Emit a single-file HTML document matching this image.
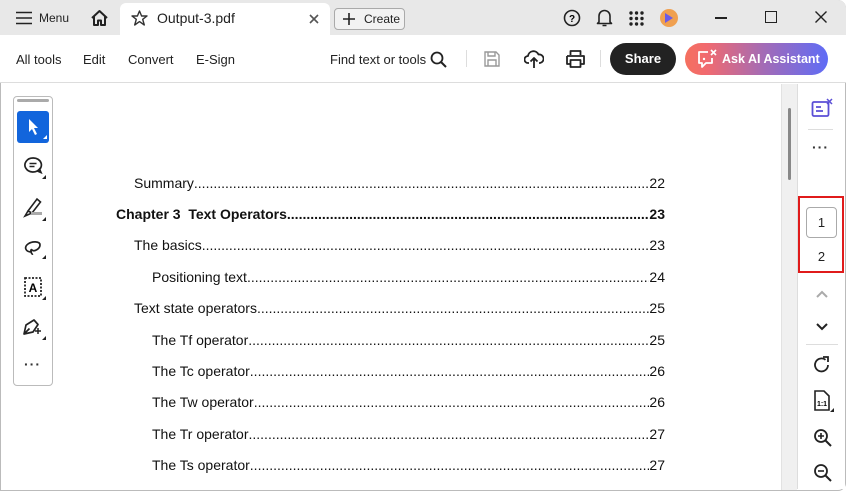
<!DOCTYPE html>
<html><head><meta charset="utf-8"><style>
*{box-sizing:border-box;margin:0;padding:0}
body{width:846px;height:491px;overflow:hidden;font-family:"Liberation Sans",Arial,sans-serif;background:#fff;position:relative;color:#222}
.abs{position:absolute}
#title{left:0;top:0;width:846px;height:35px;background:#e8e8e8;border-top-right-radius:8px}
#tab{left:120px;top:3px;width:210px;height:32px;background:#fff;border-radius:6px 6px 0 0}
.t{font-size:13px;color:#222}
#tb{left:0;top:35px;width:846px;height:48px;background:#fff;border-bottom:1px solid #ddd}
.toc{position:absolute;left:0;width:665px;display:flex;font-size:14px;color:#111;line-height:16px;white-space:nowrap}
.toc .l{flex:1;overflow:hidden;}
.toc .l::after{content:"................................................................................................................................................................................................................................................................"}
.dots{font-size:14px;font-weight:bold;letter-spacing:1px;color:#333}
</style></head><body>
<div class="abs" style="left:0;top:0;width:846px;height:491px;border:1px solid #bbb;border-radius:0 8px 8px 0"></div>
<div id="title" class="abs"></div>
<svg class="abs" style="left:16px;top:11px" width="16" height="14"><path d="M0 1.5H16M0 7H16M0 12.5H16" stroke="#222" stroke-width="1.6"/></svg>
<div class="abs t" style="left:39px;top:11px;font-size:12px">Menu</div>
<svg class="abs" style="left:90px;top:9px" width="19" height="18"><path d="M2 9L9.5 2L17 9M4 7.5V16H8V11.5H11V16H15V7.5" fill="none" stroke="#222" stroke-width="2" stroke-linejoin="round"/></svg>
<div id="tab" class="abs"></div>
<svg class="abs" style="left:131px;top:10px" width="17" height="16"><path d="M8.5 1L10.6 6H16L11.7 9.3L13.3 15L8.5 11.6L3.7 15L5.3 9.3L1 6H6.4Z" fill="none" stroke="#333" stroke-width="1.4" stroke-linejoin="round"/></svg>
<div class="abs t" style="left:157px;top:10px;font-size:14px">Output-3.pdf</div>
<svg class="abs" style="left:309px;top:14px" width="10" height="10"><path d="M1 1L9 9M9 1L1 9" stroke="#555" stroke-width="1.6"/></svg>
<div class="abs" style="left:334px;top:8px;width:71px;height:22px;border:1px solid #aaa;border-radius:4px;background:#f2f2f2"></div>
<svg class="abs" style="left:343px;top:13px" width="12" height="12"><path d="M6 0V12M0 6H12" stroke="#222" stroke-width="1.6"/></svg>
<div class="abs t" style="left:364px;top:12px;font-size:12px">Create</div>
<svg class="abs" style="left:563px;top:9px" width="18" height="18"><circle cx="9" cy="9" r="7.5" fill="none" stroke="#222" stroke-width="1.6"/><text x="9" y="13" font-size="10" font-weight="bold" text-anchor="middle" font-family="Liberation Sans">?</text></svg>
<svg class="abs" style="left:596px;top:8px" width="17" height="20"><path d="M3 14V8a5.5 5.5 0 0 1 11 0v6l1.5 1.5H1.5Z M6.5 17.5h4" fill="none" stroke="#222" stroke-width="1.6" stroke-linejoin="round"/></svg>
<svg class="abs" style="left:629px;top:11px" width="15" height="15" fill="#222"><circle cx="2" cy="2" r="1.7"/><circle cx="7.5" cy="2" r="1.7"/><circle cx="13" cy="2" r="1.7"/><circle cx="2" cy="7.5" r="1.7"/><circle cx="7.5" cy="7.5" r="1.7"/><circle cx="13" cy="7.5" r="1.7"/><circle cx="2" cy="13" r="1.7"/><circle cx="7.5" cy="13" r="1.7"/><circle cx="13" cy="13" r="1.7"/></svg>
<div class="abs" style="left:660px;top:9px;width:18px;height:18px;border-radius:50%;background:#f0a050"><div style="margin:4px 0 0 5px;width:0;height:0;border-left:8px solid #6b5ce7;border-top:5px solid transparent;border-bottom:5px solid transparent"></div></div>
<div class="abs" style="left:715px;top:17px;width:12px;height:1.5px;background:#222"></div>
<div class="abs" style="left:765px;top:11px;width:12px;height:12px;border:1.5px solid #222"></div>
<svg class="abs" style="left:815px;top:11px" width="12" height="12"><path d="M0.5 0.5L11.5 11.5M11.5 0.5L0.5 11.5" stroke="#222" stroke-width="1.4"/></svg>
<div id="tb" class="abs"></div>
<div class="abs t" style="left:16px;top:52px">All tools</div>
<div class="abs t" style="left:83px;top:52px">Edit</div>
<div class="abs t" style="left:128px;top:52px">Convert</div>
<div class="abs t" style="left:196px;top:52px">E-Sign</div>
<div class="abs t" style="left:330px;top:52px">Find text or tools</div>
<svg class="abs" style="left:430px;top:51px" width="17" height="17"><circle cx="7" cy="7" r="5.5" fill="none" stroke="#222" stroke-width="1.8"/><path d="M11 11L16 16" stroke="#222" stroke-width="2"/></svg>
<div class="abs" style="left:466px;top:50px;width:1px;height:17px;background:#ddd"></div>
<svg class="abs" style="left:484px;top:51px" width="16" height="16"><path d="M1 1H12L15 4V15H1Z M4 1V5H11V1 M4 15V9H12V15" fill="none" stroke="#999" stroke-width="1.4"/></svg>
<svg class="abs" style="left:524px;top:49px" width="20" height="20"><path d="M5 14H4a3.5 3.5 0 0 1 0-7 5.5 5.5 0 0 1 10.5-1.5A4 4 0 0 1 16 14h-1 M10 19V9M6.5 12.5L10 9l3.5 3.5" fill="none" stroke="#222" stroke-width="1.8" stroke-linejoin="round"/></svg>
<svg class="abs" style="left:566px;top:50px" width="19" height="18"><path d="M4.5 5V1h10v4 M1 6h17v8h-3.5 M4.5 14H1V6 M4.5 10h10v7h-10Z" fill="none" stroke="#222" stroke-width="1.8" stroke-linejoin="round"/></svg>
<div class="abs" style="left:600px;top:50px;width:1px;height:17px;background:#ddd"></div>
<div class="abs" style="left:610px;top:43px;width:66px;height:32px;background:#222;border-radius:16px;color:#fff;font-weight:bold;font-size:13px;text-align:center;line-height:32px">Share</div>
<div class="abs" style="left:685px;top:43px;width:143px;height:32px;border-radius:16px;background:linear-gradient(90deg,#f5705f 0%,#f16a6f 15%,#a36bb6 55%,#5f6cf6 100%);color:#fff;font-weight:bold;font-size:12.5px;line-height:32px;padding-left:37px;white-space:nowrap;overflow:hidden">Ask AI Assistant</div>
<svg class="abs" style="left:697px;top:49px" width="20" height="20"><path d="M11 3H2V14H5V18L9 14H15V9" fill="none" stroke="#fff" stroke-width="1.8" stroke-linejoin="round"/><path d="M14 1L19 6M19 1L14 6" stroke="#fff" stroke-width="1.6"/><circle cx="7" cy="10" r="1.2" fill="#fff"/></svg>
<div class="abs" style="left:13px;top:96px;width:40px;height:290px;border:1px solid #bbb;border-radius:4px;background:#fff"></div>
<div class="abs" style="left:17px;top:99px;width:32px;height:3px;background:#aaa;border-radius:2px"></div>
<div class="abs" style="left:17px;top:111px;width:32px;height:32px;background:#1265dc;border-radius:3px"></div>
<svg class="abs" style="left:27px;top:118px" width="20" height="22"><path d="M2 1V14L5 11L8 17L10 16L7 10H11Z" fill="#fff"/><path d="M20 17V21H16Z" fill="#fff"/></svg>
<svg class="abs" style="left:23px;top:156px" width="24" height="24"><path d="M10 2a8 7 0 1 0 6.5 11l1.5 3.5-3.5-1.5A8 7 0 0 0 10 2Z" fill="none" stroke="#222" stroke-width="1.7"/><path d="M6.5 7.5H13.5M6.5 10.5H11.5" stroke="#222" stroke-width="1.6"/><path d="M23 19V23H19Z" fill="#222"/></svg>
<svg class="abs" style="left:23px;top:196px" width="24" height="26"><path d="M5 15L14 3L17.5 6L9 17Z M2 20L5 15L9 17Z" fill="none" stroke="#222" stroke-width="1.6"/><rect x="8" y="16" width="11" height="3" fill="#aaa"/><path d="M23 21V25H19Z" fill="#222"/></svg>
<svg class="abs" style="left:23px;top:237px" width="24" height="24"><path d="M9 15C2 15 1 10 5 7S17 4 17 8s-6 7-8 5-1 5 1 4" fill="none" stroke="#222" stroke-width="1.7"/><path d="M23 18V22H19Z" fill="#222"/></svg>
<svg class="abs" style="left:23px;top:276px" width="24" height="26"><rect x="2" y="2" width="16" height="18" fill="none" stroke="#222" stroke-width="1.8" stroke-dasharray="2 1.5"/><text x="10" y="16" font-size="12" font-weight="bold" text-anchor="middle" font-family="Liberation Sans">A</text><path d="M23 20V24H19Z" fill="#222"/></svg>
<svg class="abs" style="left:22px;top:316px" width="25" height="26"><path d="M2 18L4 9L12 4L16 8.5L11 16Z M2 18L7.5 12.5" fill="none" stroke="#222" stroke-width="1.7" stroke-linejoin="round"/><path d="M13 15h6M16 12v6" stroke="#222" stroke-width="1.5"/><path d="M24 20V24H20Z" fill="#222"/></svg>
<div class="abs dots" style="left:24px;top:356px">···</div>
<div class="toc" style="top:175px"><span style="padding-left:134px">Summary</span><span class="l"></span><span>22</span></div>
<div class="toc" style="top:206px;font-weight:bold"><span style="padding-left:116px">Chapter 3&nbsp; Text Operators </span><span class="l"></span><span>23</span></div>
<div class="toc" style="top:237px"><span style="padding-left:134px">The basics </span><span class="l"></span><span>23</span></div>
<div class="toc" style="top:269px"><span style="padding-left:152px">Positioning text</span><span class="l"></span><span>24</span></div>
<div class="toc" style="top:300px"><span style="padding-left:134px">Text state operators</span><span class="l"></span><span>25</span></div>
<div class="toc" style="top:332px"><span style="padding-left:152px">The Tf operator </span><span class="l"></span><span>25</span></div>
<div class="toc" style="top:363px"><span style="padding-left:152px">The Tc operator </span><span class="l"></span><span>26</span></div>
<div class="toc" style="top:394px"><span style="padding-left:152px">The Tw operator</span><span class="l"></span><span>26</span></div>
<div class="toc" style="top:426px"><span style="padding-left:152px">The Tr operator </span><span class="l"></span><span>27</span></div>
<div class="toc" style="top:457px"><span style="padding-left:152px">The Ts operator </span><span class="l"></span><span>27</span></div>
<div class="abs" style="left:781px;top:84px;width:16px;height:406px;background:#f0f0f0;border-left:1px solid #e2e2e2"></div>
<div class="abs" style="left:788px;top:108px;width:3px;height:72px;background:#888;border-radius:2px"></div>
<div class="abs" style="left:797px;top:84px;width:48px;height:405px;background:#fff;border-left:1px solid #ddd"></div>
<svg class="abs" style="left:811px;top:98px" width="22" height="20"><rect x="1.5" y="4" width="16" height="14" rx="1.5" fill="none" stroke="#5b4fd6" stroke-width="1.8"/><path d="M5 9H10M5 13H12" stroke="#5b4fd6" stroke-width="1.8"/><path d="M16 1L21 6M21 1L16 6" stroke="#5b4fd6" stroke-width="1.5"/></svg>
<div class="abs" style="left:808px;top:129px;width:25px;height:1px;background:#ddd"></div>
<div class="abs dots" style="left:812px;top:139px">···</div>
<div class="abs" style="left:798px;top:196px;width:46px;height:77px;border:2px solid #e01b1b"></div>
<div class="abs" style="left:806px;top:207px;width:31px;height:31px;border:1px solid #aaa;border-radius:4px;text-align:center;line-height:29px;font-size:13px">1</div>
<div class="abs" style="left:806px;top:249px;width:31px;text-align:center;font-size:13px">2</div>
<svg class="abs" style="left:816px;top:290px" width="12" height="8"><path d="M1 7L6 2L11 7" fill="none" stroke="#aaa" stroke-width="2"/></svg>
<svg class="abs" style="left:816px;top:323px" width="12" height="8"><path d="M1 1L6 6L11 1" fill="none" stroke="#222" stroke-width="2"/></svg>
<div class="abs" style="left:806px;top:344px;width:32px;height:1px;background:#ddd"></div>
<svg class="abs" style="left:813px;top:356px" width="18" height="18"><path d="M15 9A6.5 6.5 0 1 1 12.5 3.8" fill="none" stroke="#222" stroke-width="1.8"/><path d="M10 1H15V6" fill="none" stroke="#222" stroke-width="1.8"/></svg>
<svg class="abs" style="left:813px;top:390px" width="22" height="24"><path d="M2 1H11L16 6V20H2Z" fill="none" stroke="#222" stroke-width="1.6"/><text x="9" y="16" font-size="7" font-weight="bold" text-anchor="middle" font-family="Liberation Sans">1:1</text><path d="M21 18V22H17Z" fill="#222"/></svg>
<svg class="abs" style="left:813px;top:428px" width="19" height="19"><circle cx="8" cy="8" r="6" fill="none" stroke="#222" stroke-width="1.8"/><path d="M12.5 12.5L18 18" stroke="#222" stroke-width="2"/><path d="M5 8H11M8 5V11" stroke="#222" stroke-width="1.6"/></svg>
<svg class="abs" style="left:813px;top:463px" width="19" height="19"><circle cx="8" cy="8" r="6" fill="none" stroke="#222" stroke-width="1.8"/><path d="M12.5 12.5L18 18" stroke="#222" stroke-width="2"/><path d="M5 8H11" stroke="#222" stroke-width="1.6"/></svg>
</body></html>
